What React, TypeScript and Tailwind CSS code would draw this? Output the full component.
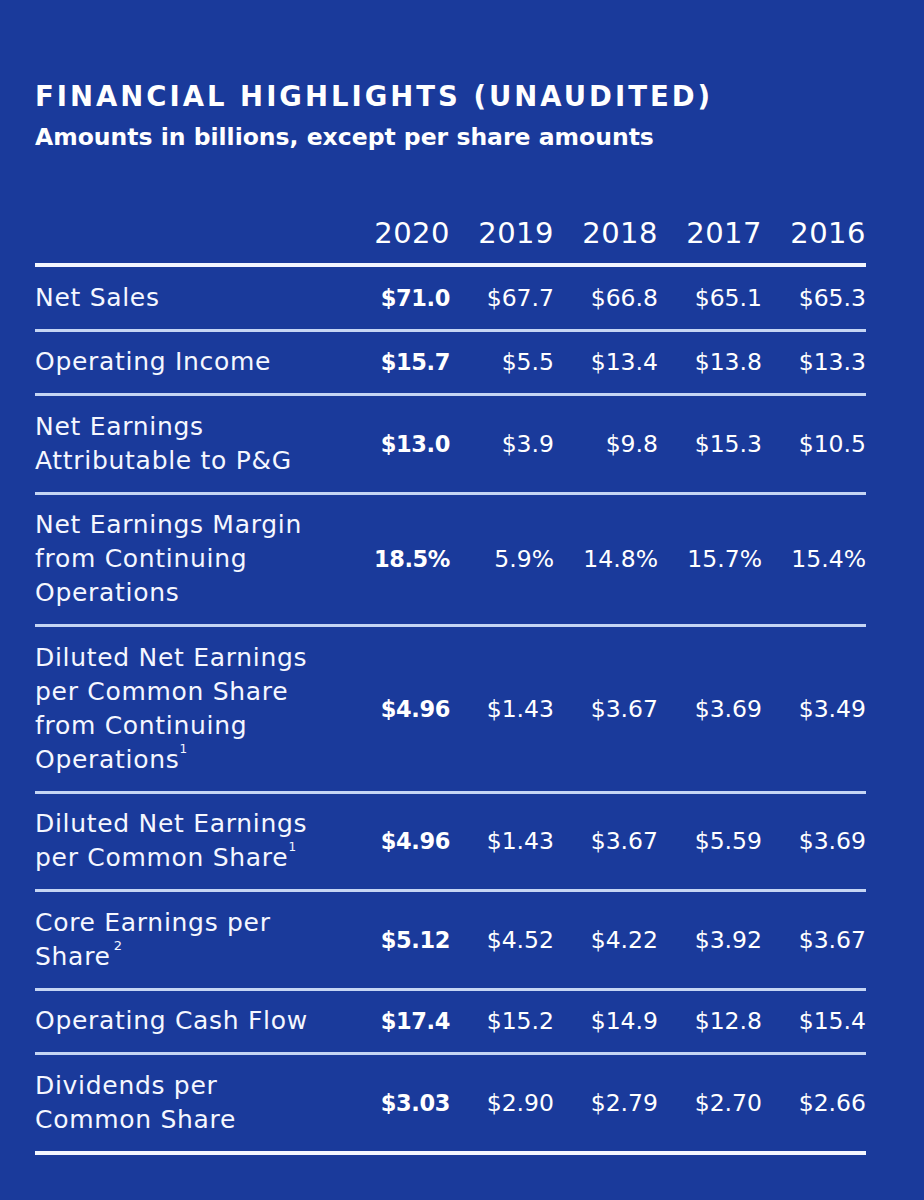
import React from 'react'

type Row = {
  label: React.ReactNode[]
  values: string[]
}

const years = ['2020', '2019', '2018', '2017', '2016']

const rows: Row[] = [
  { label: ['Net Sales'], values: ['$71.0', '$67.7', '$66.8', '$65.1', '$65.3'] },
  { label: ['Operating Income'], values: ['$15.7', '$5.5', '$13.4', '$13.8', '$13.3'] },
  { label: ['Net Earnings', 'Attributable to P&G'], values: ['$13.0', '$3.9', '$9.8', '$15.3', '$10.5'] },
  {
    label: ['Net Earnings Margin', 'from Continuing', 'Operations'],
    values: ['18.5%', '5.9%', '14.8%', '15.7%', '15.4%'],
  },
  {
    label: [
      'Diluted Net Earnings',
      'per Common Share',
      'from Continuing',
      <>Operations<sup className="text-[12px] align-[0.75em] tracking-normal">1</sup></>,
    ],
    values: ['$4.96', '$1.43', '$3.67', '$3.69', '$3.49'],
  },
  {
    label: ['Diluted Net Earnings', <>per Common Share<sup className="text-[12px] align-[0.75em] tracking-normal">1</sup></>],
    values: ['$4.96', '$1.43', '$3.67', '$5.59', '$3.69'],
  },
  {
    label: ['Core Earnings per', <>Share<sup className="text-[13px] align-[0.65em] ml-[3px]">2</sup></>],
    values: ['$5.12', '$4.52', '$4.22', '$3.92', '$3.67'],
  },
  { label: ['Operating Cash Flow'], values: ['$17.4', '$15.2', '$14.9', '$12.8', '$15.4'] },
  { label: ['Dividends per', 'Common Share'], values: ['$3.03', '$2.90', '$2.79', '$2.70', '$2.66'] },
]

export default function App() {
  return (
    <div
      className="min-h-[1200px] w-[924px] bg-[#1a3a9b] text-white pl-[35px] pr-[58px] pt-[80px]"
      style={{ fontFamily: '"DejaVu Sans", sans-serif' }}
    >
      {/* Heading */}
      <h1 className="text-[27.5px] leading-[33px] font-bold tracking-[3px] whitespace-nowrap">
        FINANCIAL HIGHLIGHTS (UNAUDITED)
      </h1>
      <p className="mt-[9px] text-[23.5px] leading-[30px] font-bold whitespace-nowrap">
        Amounts in billions, except per share amounts
      </p>

      {/* Table */}
      <div className="mt-[63px]">
        <div className="grid grid-cols-[1fr_repeat(5,104px)] pb-[12px] border-b-4 border-[#f3f6ff]">
          <div />
          {years.map(y => (
            <div key={y} className="text-right text-[29px] leading-[36px] tracking-[0.5px]">
              {y}
            </div>
          ))}
        </div>

        {rows.map((row, i) => (
          <div
            key={i}
            className={
              'grid grid-cols-[1fr_repeat(5,104px)] items-center py-[13.75px] ' +
              (i === rows.length - 1 ? 'border-b-4 border-[#f3f6ff]' : 'border-b-[3px] border-[#c5d5f4]')
            }
          >
            <div className="text-[25px] leading-[34px] tracking-[0.7px] text-[#f5f7ff]">
              {row.label.map((l, j) => (
                <div key={j} className="whitespace-nowrap">
                  {l}
                </div>
              ))}
            </div>
            {row.values.map((v, j) => (
              <div
                key={j}
                className={
                  'text-right leading-[34px] whitespace-nowrap ' +
                  (j === 0 ? 'text-[22.5px] font-bold tracking-[-0.4px]' : 'text-[23.5px]')
                }
              >
                {v}
              </div>
            ))}
          </div>
        ))}
      </div>
    </div>
  )
}
